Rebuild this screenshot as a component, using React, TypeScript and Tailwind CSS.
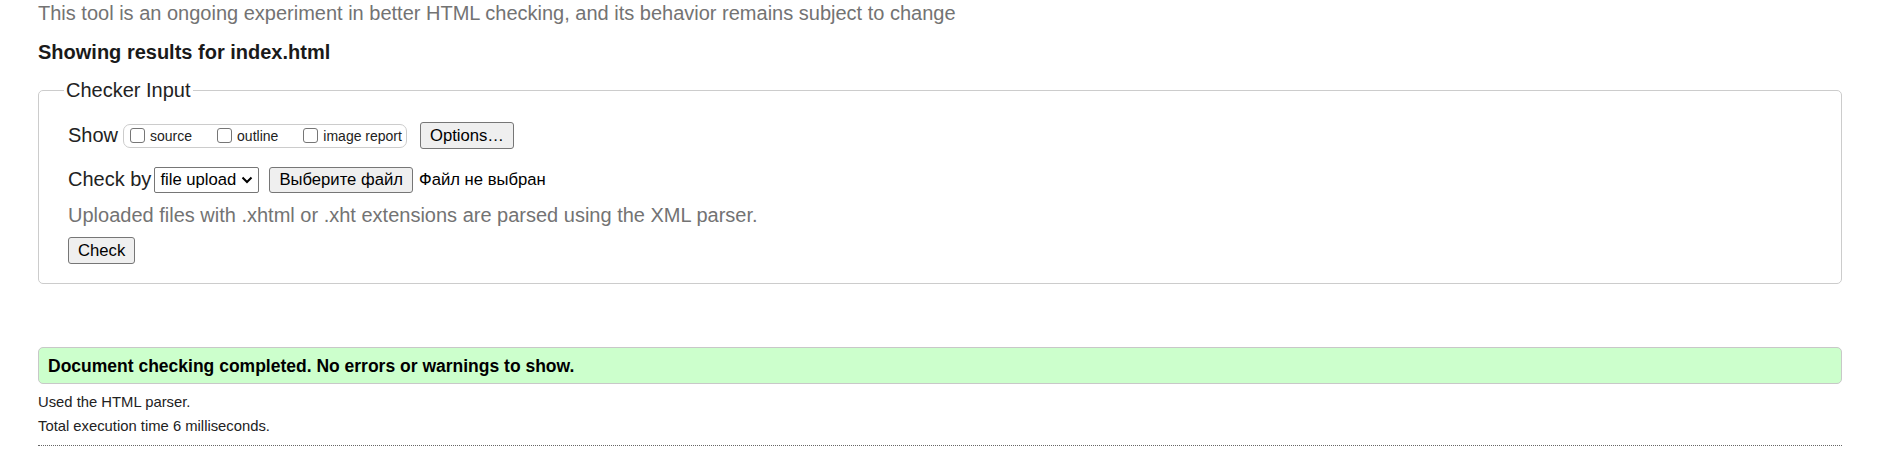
const Checkbox = ({ label }: { label: string }) => {
  return (
    <label className="flex items-center">
      <span className="h-[15px] w-[15px] rounded-[3px] border border-[#767676] bg-white" />
      <span className="ml-[5px] text-[14px] leading-[16px] text-[#222]">{label}</span>
    </label>
  )
}

const Btn = ({ children, h = "h-[27px]" }: { children: React.ReactNode; h?: string }) => {
  return (
    <button
      className={`${h} flex items-center rounded-[3px] border border-[#767676] bg-[#efefef] px-[9px] text-[16.67px] leading-[19px] text-black`}
    >
      {children}
    </button>
  )
}

const CheckerInput = () => {
  return (
    <fieldset className="mt-[15px] rounded-[5px] border border-[#cccccc] pb-[19px] pl-[25px] pr-[25px] pt-[20px]">
      <legend className="px-[2px] text-[20px] leading-[23px] text-[#222]">Checker Input</legend>
      <div className="pl-[4px]">
        <div className="flex h-[27px] items-center">
          <span className="text-[20px] leading-[23px] text-[#222]">Show</span>
          <div className="ml-[5px] flex h-[24px] items-center gap-[25px] rounded-[7px] border border-[#cccccc] pl-[6px] pr-[4px]">
            <Checkbox label="source" />
            <Checkbox label="outline" />
            <Checkbox label="image report" />
          </div>
          <div className="ml-[13px]">
            <Btn>Options…</Btn>
          </div>
        </div>

        <div className="mt-[17px] flex h-[27px] items-center">
          <span className="text-[20px] leading-[23px] text-[#222]">Check by</span>
          <div className="ml-[3px] flex h-[26px] w-[105px] items-center justify-between rounded-[2px] border border-[#767676] bg-white pl-[5px] pr-[5px] text-[16.67px] leading-[19px] text-black">
            <span>file upload</span>
            <svg width="12" height="8" viewBox="0 0 12 8" fill="none">
              <path d="M1.5 1.5 L6 6 L10.5 1.5" stroke="#000" strokeWidth="2" />
            </svg>
          </div>
          <div className="ml-[10px]">
            <Btn h="h-[26px]">Выберите файл</Btn>
          </div>
          <span className="ml-[6px] text-[16.67px] leading-[19px] text-black">Файл не выбран</span>
        </div>

        <p className="mt-[11px] text-[20px] leading-[23px] text-[#737373]">
          Uploaded files with .xhtml or .xht extensions are parsed using the XML parser.
        </p>

        <div className="mt-[10px] flex">
          <Btn>Check</Btn>
        </div>
      </div>
    </fieldset>
  )
}

const App = () => {
  return (
    <div className="min-h-[468px] bg-white pl-[38px] pr-[49px] pt-[2px] font-['Liberation_Sans',Arial,sans-serif]">
      <p className="text-[20px] leading-[23px] text-[#737373]">
        This tool is an ongoing experiment in better HTML checking, and its behavior remains subject to change
      </p>
      <h2 className="mt-[16px] text-[20px] font-bold leading-[23px] text-[#1a1a1a]">Showing results for index.html</h2>

      <CheckerInput />

      <div className="mt-[63px] flex h-[37px] items-center rounded-[5px] border border-[#c8c8c8] bg-[#ccffcc] pl-[9px]">
        <span className="text-[17.5px] font-bold leading-[20px] text-black">
          Document checking completed. No errors or warnings to show.
        </span>
      </div>

      <div className="mt-[6px] text-[14.8px] leading-[24px] text-[#222]">
        <p>Used the HTML parser.</p>
        <p>Total execution time 6 milliseconds.</p>
      </div>

      <div className="mt-[7px] border-t border-dotted border-[#666]" />
    </div>
  )
}

export default App
